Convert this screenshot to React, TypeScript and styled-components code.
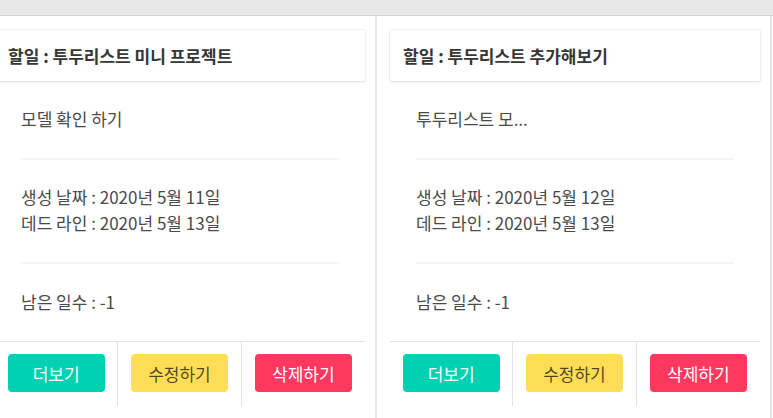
import styled, { createGlobalStyle } from 'styled-components';

const GlobalStyle = createGlobalStyle`
  html, body {
    margin: 0;
    padding: 0;
    background: #fff;
    overflow: hidden;
  }

  body {
    font-family: 'Noto Sans CJK KR', 'Noto Sans', sans-serif;
    font-size: 17px;
    color: #4a4a4a;
  }
`;

type Todo = {
  title: string;
  memo: string;
  createdAt: string;
  deadline: string;
  remain: number;
};

const todos: Todo[] = [
  {
    title: '투두리스트 미니 프로젝트',
    memo: '모델 확인 하기',
    createdAt: '2020년 5월 11일',
    deadline: '2020년 5월 13일',
    remain: -1,
  },
  {
    title: '투두리스트 추가해보기',
    memo: '투두리스트 모...',
    createdAt: '2020년 5월 12일',
    deadline: '2020년 5월 13일',
    remain: -1,
  },
];

const Page = styled.div`
  height: 418px;
  display: flex;
  flex-direction: column;
`;

const TopBar = styled.div`
  height: 15px;
  flex-shrink: 0;
  background: #e8e8e8;
  border-bottom: 1px solid #d2d2d2;
`;

const Board = styled.div`
  flex: 1;
  display: flex;
  margin-left: -18px;
`;

const Column = styled.section`
  width: 370px;
  flex-shrink: 0;
  padding: 14px 10px 0 13px;
  border-right: 2px solid #e6e6e6;
`;

const CardHeader = styled.header`
  height: 51px;
  display: flex;
  align-items: center;
  padding: 0 13px;
  box-sizing: border-box;
  background: #fff;
  box-shadow: 0 1px 3px rgba(10, 10, 10, 0.1), 0 0 0 1px rgba(10, 10, 10, 0.03);
`;

const Title = styled.h2`
  margin: 0;
  font-size: 17px;
  font-weight: 700;
  color: #363636;
  line-height: 24px;
`;

const CardContent = styled.div`
  padding: 25px 26px 26px;
`;

const Line = styled.p`
  margin: 0;
  line-height: 26px;
`;

const Divider = styled.hr<{ $after?: number }>`
  border: none;
  height: 2px;
  background: #f5f5f5;
  margin: 26px 0 ${(p) => p.$after ?? 24}px;
`;

const CardFooter = styled.footer`
  display: grid;
  grid-template-columns: repeat(3, 1fr);
  border-top: 1px solid #e2e2e2;
`;

const FooterItem = styled.div`
  display: flex;
  justify-content: center;
  padding: 12px 0 14px;

  &:not(:last-child) {
    border-right: 1px solid #e2e2e2;
  }
`;

const variants = {
  primary: { bg: '#00d1b2', fg: '#fff' },
  warning: { bg: '#ffdd57', fg: 'rgba(0, 0, 0, 0.7)' },
  danger: { bg: '#ff3860', fg: '#fff' },
};

const Button = styled.button<{ $variation: keyof typeof variants }>`
  width: 97px;
  height: 38px;
  border: none;
  border-radius: 4px;
  font-family: inherit;
  font-size: 17px;
  cursor: pointer;
  background: ${(p) => variants[p.$variation].bg};
  color: ${(p) => variants[p.$variation].fg};
`;

const TodoColumn = ({ todo }: { todo: Todo }) => {
  return (
    <Column>
      <CardHeader>
        <Title>할일 : {todo.title}</Title>
      </CardHeader>
      <CardContent>
        <Line>{todo.memo}</Line>
        <Divider />
        <Line>생성 날짜 : {todo.createdAt}</Line>
        <Line>데드 라인 : {todo.deadline}</Line>
        <Divider $after={25} />
        <Line>남은 일수 : {todo.remain}</Line>
      </CardContent>
      <CardFooter>
        <FooterItem>
          <Button $variation="primary">더보기</Button>
        </FooterItem>
        <FooterItem>
          <Button $variation="warning">수정하기</Button>
        </FooterItem>
        <FooterItem>
          <Button $variation="danger">삭제하기</Button>
        </FooterItem>
      </CardFooter>
    </Column>
  );
};

export default function App() {
  return (
    <>
      <GlobalStyle />
      <Page>
        <TopBar />
        <Board>
          {todos.map((todo) => (
            <TodoColumn key={todo.title} todo={todo} />
          ))}
        </Board>
      </Page>
    </>
  );
}
